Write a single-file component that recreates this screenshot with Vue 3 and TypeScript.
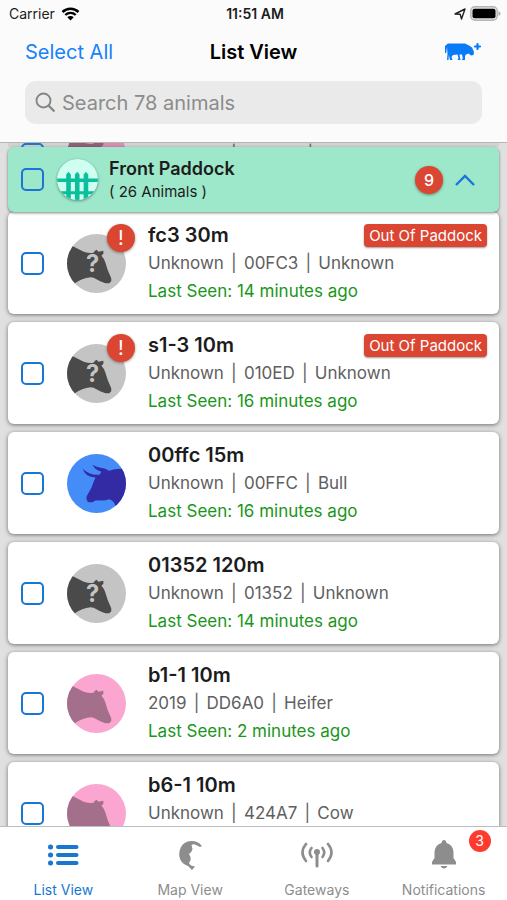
<script setup lang="ts">
import { ref } from 'vue'

type Kind = 'unknown' | 'bull' | 'cow'

interface Animal {
  name: string
  details: string[]
  seen: string
  kind: Kind
  alert: boolean
  selected: boolean
}

const query = ref('')
const expanded = ref(true)
const paddockSelected = ref(false)
const previousSelected = ref(false)
const activeTab = ref('List View')

const previousDetails = ['Unknown', '00DD3', 'Cow']

const animals = ref<Animal[]>([
  { name: 'fc3 30m', details: ['Unknown', '00FC3', 'Unknown'], seen: '14 minutes ago', kind: 'unknown', alert: true, selected: false },
  { name: 's1-3 10m', details: ['Unknown', '010ED', 'Unknown'], seen: '16 minutes ago', kind: 'unknown', alert: true, selected: false },
  { name: '00ffc 15m', details: ['Unknown', '00FFC', 'Bull'], seen: '16 minutes ago', kind: 'bull', alert: false, selected: false },
  { name: '01352 120m', details: ['Unknown', '01352', 'Unknown'], seen: '14 minutes ago', kind: 'unknown', alert: false, selected: false },
  { name: 'b1-1 10m', details: ['2019', 'DD6A0', 'Heifer'], seen: '2 minutes ago', kind: 'cow', alert: false, selected: false },
  { name: 'b6-1 10m', details: ['Unknown', '424A7', 'Cow'], seen: '', kind: 'cow', alert: false, selected: false },
])

const tabs = ['List View', 'Map View', 'Gateways', 'Notifications']

const cowHead =
  'M0 10 L7 13 L17 18 Q23 20 27 19 Q28 17 30 16 L32 18 L37 17 L37 20 L35 22 Q38 25 39 29 Q41 37 45 45 L45 48 L43 50 L39 50 Q33 48 30 46 Q27 44 24 44 Q15 45 8 50 L0 56 Z'
const bullHead =
  'M60 15 L55 15 Q48 15 43 17 Q38 14 34 14 Q29 13 26 11 Q28 16 35 18 L33 21 Q23 22 16 15 Q18 23 29 24 Q27 28 25 34 L20 43 Q19 47 22 49 L26 49 Q28 47 31 47 Q38 48 43 46 Q48 48 49 52 L52 60 H60 Z'

function selectAll(): void {
  animals.value.forEach((a) => { a.selected = true })
}
</script>

<template>
  <div class="app">
    <header class="top">
      <div class="status">
        <div class="carrier">
          <span>Carrier</span>
          <svg width="19" height="14" viewBox="0 0 19 14" aria-hidden="true">
            <path d="M1.5 5 A11.5 11.5 0 0 1 17.5 5" fill="none" stroke="#000" stroke-width="2.5" />
            <path d="M4.3 8 A7.4 7.4 0 0 1 14.7 8" fill="none" stroke="#000" stroke-width="2.4" />
            <path d="M6.3 10.2 A4.6 4.6 0 0 1 12.7 10.2 L9.5 13.6 Z" />
          </svg>
        </div>
        <span class="clock">11:51 AM</span>
        <div class="power">
          <svg width="12" height="12" viewBox="0 0 12 12" aria-hidden="true">
            <path d="M1 6 L11 1 L7.5 11 L6.2 6.2 Z" fill="none" stroke="#222" stroke-width="1.4" stroke-linejoin="round" />
          </svg>
          <svg width="31" height="15" viewBox="0 0 31 15" aria-hidden="true">
            <rect x=".8" y=".8" width="26.4" height="13.4" rx="4" fill="#e6e6e6" stroke="#b5b5b5" stroke-width="1.4" />
            <rect x="2.5" y="2.700" width="23" height="9.600" rx="2" />
            <path d="M28.5 5 Q30.5 6 30.5 7.5 Q30.5 9 28.5 10 Z" fill="#aaa" />
          </svg>
        </div>
      </div>
      <div class="nav">
        <button class="select-all" type="button" @click="selectAll">Select All</button>
        <h1>List View</h1>
        <button class="add" type="button" aria-label="Add animal">
          <svg width="38" height="20" viewBox="0 0 38 20" aria-hidden="true">
            <path fill="#087cf7" d="M4 1.500 H21 L25 3.500 L28 5.500 L30 10 L29.500 13 L27 13.500 L24.500 11.500 L22 12.500 L21 14 V18 H17.500 L18.800 16.500 L18 12.500 H15.500 L16.500 18 H13.500 L14.500 16 L13.500 12.500 L9 13 L7.500 15 L8.500 18 H6 L4.800 13 L4.500 18 H3 L3.500 12 L3 5 L2.200 11 H1 V4 Z" />
            <path fill="none" stroke="#087cf7" stroke-width="2.200" stroke-linecap="round" d="M33.500 2 V7 M31 4.500 H36" />
          </svg>
        </button>
      </div>
      <label class="search">
        <svg width="21" height="21" viewBox="0 0 21 21" aria-hidden="true">
          <circle cx="8.500" cy="8.500" r="7" fill="none" stroke="#858585" stroke-width="1.900" />
          <path d="M13.600 13.600 L19.500 19.500" stroke="#858585" stroke-width="2.200" />
        </svg>
        <input v-model="query" type="text" placeholder="Search 78 animals" aria-label="Search animals" />
      </label>
    </header>

    <main class="list">
      <div class="peek">
        <article class="card">
          <input v-model="previousSelected" class="box" type="checkbox" aria-label="Animal" />
          <div class="avatar">
            <svg class="face" viewBox="0 0 60 60" aria-hidden="true">
              <rect width="60" height="60" fill="#d98bb2" />
              <path :d="cowHead" fill="#8f5f78" />
            </svg>
          </div>
          <div class="info">
            <p class="details"><span v-for="(d, i) in previousDetails" :key="i">{{ d }}</span></p>
          </div>
        </article>
      </div>

      <section class="paddock">
        <input v-model="paddockSelected" class="box" type="checkbox" aria-label="Front Paddock" />
        <svg class="fence" width="41" height="41" viewBox="0 0 40 40" aria-hidden="true">
          <defs><clipPath id="fence-clip"><circle cx="20" cy="20" r="20" /></clipPath></defs>
          <g clip-path="url(#fence-clip)">
            <rect width="40" height="40" fill="#cffff0" />
            <path d="M0 19 H40 V22.500 H0 Z M0 31.500 H40 V34.500 H0 Z" fill="#0abf9b" />
            <path d="M9 40 V15 L11.200 12.500 L13.500 15 V40 Z M17.500 40 V15 L19.800 12.500 L22 15 V40 Z M26 40 V15 L28.200 12.500 L30.500 15 V40 Z" fill="#0abf9b" />
          </g>
        </svg>
        <div class="paddock-text">
          <h2>Front Paddock</h2>
          <p>( 26 Animals )</p>
        </div>
        <span class="count">9</span>
        <button class="toggle" type="button" aria-label="Toggle paddock" :aria-expanded="expanded" @click="expanded = !expanded">
          <svg width="22" height="14" viewBox="0 0 22 14" aria-hidden="true">
            <path d="M2 12 L11 3 L20 12" fill="none" stroke="#1976d2" stroke-width="2.400" />
          </svg>
        </button>
      </section>

      <div v-if="expanded" class="cards">
        <article v-for="a in animals" :key="a.name" class="card">
          <input v-model="a.selected" class="box" type="checkbox" :aria-label="a.name" />
          <div class="avatar">
            <svg class="face" viewBox="0 0 60 60" aria-hidden="true">
              <template v-if="a.kind === 'bull'">
                <rect width="60" height="60" fill="#448cf8" />
                <path :d="bullHead" fill="#332ba3" />
              </template>
              <template v-else-if="a.kind === 'cow'">
                <rect width="60" height="60" fill="#fba6d0" />
                <path :d="cowHead" fill="#a36f8b" />
              </template>
              <template v-else>
                <rect width="60" height="60" fill="#c4c4c4" />
                <path :d="cowHead" fill="#4a4a4a" />
                <text x="26" y="39" text-anchor="middle" class="mark">?</text>
              </template>
            </svg>
            <span v-if="a.alert" class="alert">!</span>
          </div>
          <div class="info">
            <div class="title">
              <h3>{{ a.name }}</h3>
              <span v-if="a.alert" class="tag">Out Of Paddock</span>
            </div>
            <p class="details"><span v-for="(d, i) in a.details" :key="i">{{ d }}</span></p>
            <p class="seen"><template v-if="a.seen">Last Seen: {{ a.seen }}</template></p>
          </div>
        </article>
      </div>
    </main>

    <nav class="tabs" aria-label="Main">
      <button
        v-for="(t, i) in tabs"
        :key="t"
        type="button"
        class="tab"
        :class="{ active: activeTab === t }"
        @click="activeTab = t"
      >
        <svg v-if="i === 0" width="32" height="32" viewBox="0 0 32 32" aria-hidden="true">
          <g fill="none" stroke="currentColor" stroke-linecap="round">
            <path d="M11 8 H29.500 M11 16 H29.500 M11 24 H29.500" stroke-width="4" />
            <path d="M3.500 8 H3.600 M3.500 16 H3.600 M3.500 24 H3.600" stroke-width="5" />
          </g>
        </svg>
        <svg v-else-if="i === 1" width="32" height="32" viewBox="0 0 32 32" aria-hidden="true">
          <path fill="currentColor" d="M28 7 L25 4 Q21 1.500 17 2 Q10 2.500 7 8 Q4 14 6 20 Q8 25 14 27 L18 31 L21 27.500 Q16 27 15 24 Q17.500 21 16.500 18 L15 15 Q18 13 18.500 10 L17.500 6 Q20 4.500 22 6 L26 8 Z" />
        </svg>
        <svg v-else-if="i === 2" width="32" height="32" viewBox="0 0 32 32" aria-hidden="true">
          <g fill="none" stroke="currentColor" stroke-width="2.600" stroke-linecap="round">
            <path d="M16 14 V27" stroke-width="3" />
            <path d="M10.500 9 Q7 13.500 10.500 18 M21.500 9 Q25 13.500 21.500 18 M5 5 Q-2 13.500 5 22 M27 5 Q34 13.500 27 22" />
          </g>
          <circle cx="16" cy="13" r="3" fill="currentColor" />
        </svg>
        <svg v-else width="32" height="32" viewBox="0 0 32 32" aria-hidden="true">
          <path fill="currentColor" d="M16 1 Q18 1 18.500 4 Q25 6 25.500 13 V19 L28 23 V25.500 H4 V23 L6.500 19 V13 Q7 6 13.500 4 Q14 1 16 1 Z M12.500 27 H19.500 Q18 29.500 16 29.500 Q14 29.500 12.500 27 Z" />
        </svg>
        <span>{{ t }}</span>
        <span v-if="i === 3" class="badge">3</span>
      </button>
    </nav>
  </div>
</template>

<style>
body {
  margin: 0;
  background: #e0e0e0;
}
</style>

<style scoped>
.app {
  height: 100vh;
  display: flex;
  flex-direction: column;
  font-family: Inter, "Liberation Sans", sans-serif;
  color: #1c1c1c;
}
h1, h2, h3, p { margin: 0; }
button {
  border: 0;
  padding: 0;
  background: none;
  font: inherit;
  cursor: pointer;
}
.app svg { display: block; flex: none; }

.top {
  position: relative;
  z-index: 2;
  background: #fbfbfb;
  padding-bottom: 18px;
  border-bottom: 1px solid #b5b5b5;
}
.status {
  display: grid;
  grid-template-columns: 1fr auto 1fr;
  align-items: center;
  height: 27px;
  padding: 0 6px 0 9px;
  font-size: 14px;
}
.carrier, .power {
  display: flex;
  align-items: center;
  gap: 6px;
}
.power {
  justify-content: flex-end;
  gap: 4px;
}
.clock { font-weight: 600; }
.nav {
  display: grid;
  grid-template-columns: 1fr auto 1fr;
  align-items: center;
  height: 50px;
  padding: 0 25px;
}
.select-all {
  justify-self: start;
  color: #1682fb;
  font-size: 20px;
}
h1 {
  font-size: 20px;
  font-weight: 600;
  color: #000;
}
.add { justify-self: end; }
.search {
  display: flex;
  align-items: center;
  gap: 6px;
  height: 43px;
  margin: 4px 25px 0;
  padding: 0 10px;
  border-radius: 11px;
  background: #eaeaea;
}
.search input {
  flex: 1;
  min-width: 0;
  border: 0;
  padding: 0;
  outline: 0;
  background: none;
  font: inherit;
  font-size: 20px;
  color: #222;
}
.search input::placeholder {
  color: #8c8c8c;
  opacity: 1;
}

.list {
  flex: 1;
  min-height: 0;
  overflow: hidden;
  padding: 0 8px;
}
.peek {
  height: 4px;
  overflow: hidden;
}
.peek .card {
  margin-top: -40px;
  background: #d2d2d2;
}
.paddock {
  position: relative;
  z-index: 1;
  display: flex;
  align-items: center;
  box-sizing: border-box;
  height: 65px;
  padding: 0 23px 0 13px;
  border-radius: 6px;
  background: #9de8cb;
  box-shadow: 0 1px 3px rgba(0, 0, 0, 0.5);
}
.box {
  appearance: none;
  flex: none;
  box-sizing: border-box;
  width: 23px;
  height: 23px;
  margin: 0;
  border: 2px solid #1976d2;
  border-radius: 5px;
}
.box:checked { background: #1976d2; }
.fence {
  margin-left: 13px;
  border-radius: 50%;
  box-shadow: 0 1px 3px rgba(0, 0, 0, 0.4);
}
.paddock-text {
  flex: 1;
  margin-left: 11px;
}
h2 {
  font-size: 18px;
  line-height: 24px;
  font-weight: 600;
}
.paddock-text p {
  font-size: 15px;
  line-height: 22px;
}
.count, .alert {
  display: flex;
  align-items: center;
  justify-content: center;
  width: 28px;
  height: 28px;
  border-radius: 50%;
  background: #db4632;
  color: #fff;
  box-shadow: 0 1px 3px rgba(0, 0, 0, 0.4);
}
.count {
  font-size: 16px;
  font-weight: 500;
}
.toggle { margin-left: 11px; }

.cards {
  display: flex;
  flex-direction: column;
  gap: 8px;
}
.card {
  display: flex;
  align-items: center;
  box-sizing: border-box;
  height: 102px;
  padding: 0 12px 0 13px;
  border-radius: 6px;
  background: #fff;
  box-shadow: 0 1px 4px rgba(0, 0, 0, 0.5);
}
.avatar {
  position: relative;
  flex: none;
  margin-left: 23px;
}
.face {
  width: 59px;
  height: 59px;
  border-radius: 50%;
}
.mark {
  font-size: 24px;
  font-weight: 700;
  fill: #c4c4c4;
}
.alert {
  position: absolute;
  top: -10px;
  right: -9px;
  font-size: 20px;
}
.info {
  flex: 1;
  min-width: 0;
  margin-left: 22px;
  white-space: nowrap;
}
.title {
  display: flex;
  align-items: center;
  justify-content: space-between;
}
h3 {
  font-size: 20px;
  line-height: 28px;
  font-weight: 600;
}
.details, .seen {
  min-height: 28px;
  font-size: 17px;
  line-height: 28px;
}
.details {
  display: flex;
  align-items: center;
  color: #606060;
}
.details span + span::before {
  content: "|";
  display: inline-block;
  width: 20px;
  text-align: center;
}
.seen { color: #1a961a; }
.tag {
  padding: 0 5px;
  border-radius: 4px;
  background: #db4632;
  box-shadow: 0 1px 2px rgba(0, 0, 0, 0.4);
  color: #fff;
  font-size: 15px;
  line-height: 23px;
}

.tabs {
  position: relative;
  z-index: 2;
  display: grid;
  grid-template-columns: repeat(4, 1fr);
  box-sizing: border-box;
  height: 74px;
  border-top: 1px solid #bdbdbd;
  background: #fff;
}
.tab {
  position: relative;
  display: flex;
  flex-direction: column;
  align-items: center;
  padding-top: 12px;
  gap: 9px;
  color: #8d8d8d;
  font-size: 14px;
  line-height: 20px;
}
.tab.active { color: #1976d2; }
.badge {
  position: absolute;
  top: 3px;
  left: 50%;
  width: 22px;
  margin-left: 25px;
  border-radius: 50%;
  background: #ff3b30;
  color: #fff;
  line-height: 22px;
  text-align: center;
}
</style>
